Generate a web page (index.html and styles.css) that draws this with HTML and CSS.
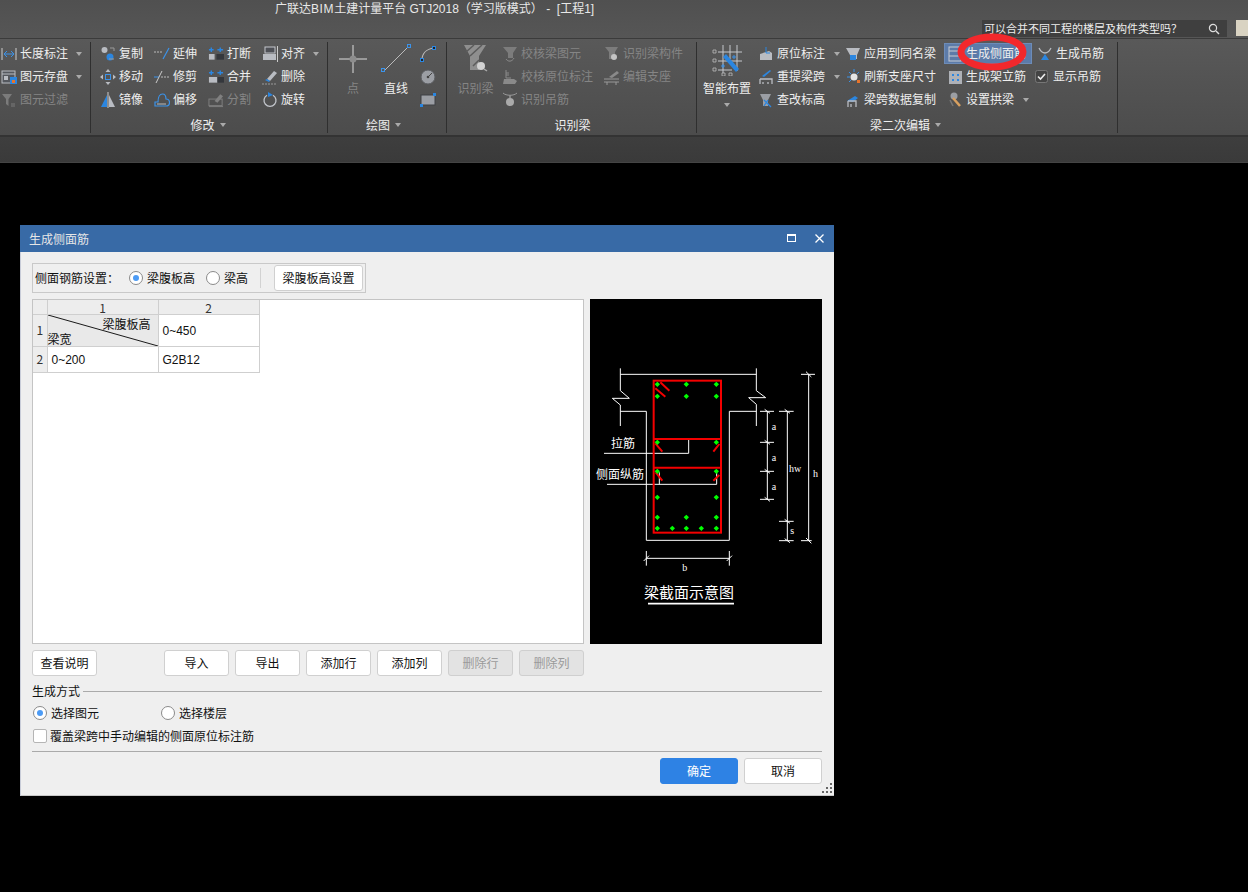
FILE: index.html
```html
<!DOCTYPE html>
<html lang="zh-CN">
<head>
<meta charset="utf-8">
<title>生成侧面筋</title>
<link rel="stylesheet" href="styles.css">
</head>
<body>
<div class="app">
  <header class="titlebar">
    <div class="app-title">广联达<span class="lat">BIM</span>土建计量平台 GTJ2018（学习版模式） -  [工程1]</div>
    <div class="search">
      <span class="search-text">可以合并不同工程的楼层及构件类型吗？</span>
      <svg class="search-ic" viewBox="0 0 12 12"><circle cx="5" cy="5" r="3.6" fill="none" stroke="#ddd" stroke-width="1.2"/><path d="M8 8l3 3" stroke="#ddd" stroke-width="1.4"/></svg>
    </div>
    <div class="avatar"></div>
  </header>

  <section class="ribbon">
    <div class="group g1">
      <div class="group-body">
        <div class="col">
          <div class="tool"><svg class="ic" viewBox="0 0 16 16"><path d="M1 2v12M15 2v12" stroke="#ccc"/><path d="M3 8h10M3 8l3-3M3 8l3 3M13 8l-3-3M13 8l-3 3" stroke="#3b93ea" fill="none"/></svg><span>长度标注</span><i class="caret"></i></div>
          <div class="tool"><svg class="ic" viewBox="0 0 16 16"><rect x="1" y="2" width="13" height="12" fill="#55585e" stroke="#b9bcc2"/><path d="M1 5h13" stroke="#b9bcc2"/><rect x="3" y="7" width="4" height="4" fill="#b9bcc2"/><rect x="9" y="8" width="7" height="7" fill="#2b86e0"/><rect x="11" y="11" width="3" height="3" fill="#e8742a"/></svg><span>图元存盘</span><i class="caret"></i></div>
          <div class="tool off"><svg class="ic" viewBox="0 0 16 16"><path d="M1 2h10L7.500 7v7L5 12V7z" fill="#7b7b7b"/><path d="M10 12h4M10 14h4" stroke="#7b7b7b"/></svg><span>图元过滤</span></div>
        </div>
      </div>
    </div>

    <div class="group g2">
      <div class="group-body">
        <div class="col">
          <div class="tool"><svg class="ic" viewBox="0 0 16 16"><circle cx="4.500" cy="4" r="3" fill="#b9bcc2"/><circle cx="10" cy="11" r="3.500" fill="#2b86e0"/><path d="M10 2h4v3M9 13h5" stroke="#9a9a9a" fill="none"/></svg><span>复制</span></div>
          <div class="tool"><svg class="ic" viewBox="0 0 16 16"><path d="M8 0l2.500 3h-5zM8 16l2.500-3h-5zM0 8l3-2.500v5zM16 8l-3-2.500v5z" fill="#b9bcc2"/><rect x="5.500" y="5.500" width="5" height="5" fill="none" stroke="#3b93ea"/></svg><span>移动</span></div>
          <div class="tool"><svg class="ic" viewBox="0 0 16 16"><path d="M7 3v12H1z" fill="#2b86e0"/><path d="M9 3v12h6z" fill="#b9bcc2"/><path d="M8 0v16" stroke="#ccc"/></svg><span>镜像</span></div>
        </div>
        <div class="col">
          <div class="tool"><svg class="ic" viewBox="0 0 16 16"><path d="M0 6h9" stroke="#bbb" stroke-dasharray="2 1"/><path d="M9 13L15 2" stroke="#3b93ea" stroke-width="1.200"/></svg><span>延伸</span></div>
          <div class="tool"><svg class="ic" viewBox="0 0 16 16"><path d="M0 8h5" stroke="#3b93ea"/><path d="M7 8h9" stroke="#bbb" stroke-dasharray="2 1"/><path d="M2 14L8 2" stroke="#ccc"/></svg><span>修剪</span></div>
          <div class="tool"><svg class="ic" viewBox="0 0 16 16"><path d="M1 14V10h3C4 5 6 2 8.500 2 11 2 12 4 12 7c2 0 3.500 1 3.500 3.500S14 14 12 14z" fill="none" stroke="#3b93ea" stroke-width="1.200"/><path d="M3 12h9" stroke="#bbb"/></svg><span>偏移</span></div>
        </div>
        <div class="col">
          <div class="tool"><svg class="ic" viewBox="0 0 17 16"><path d="M1 3.500h5M3.500 1v5M10 3.500h6M13 1v5" stroke="#2b86e0" stroke-width="1.500"/><rect x="1" y="8" width="6" height="6" fill="#b9bcc2"/><rect x="9" y="8" width="8" height="6" fill="#34373c"/></svg><span>打断</span></div>
          <div class="tool"><svg class="ic" viewBox="0 0 17 16"><path d="M1 3.500h5M3.500 1v5M10 3.500h6M13 1v5" stroke="#2b86e0" stroke-width="1.500"/><rect x="1" y="8" width="9" height="6" fill="#b9bcc2"/><rect x="10" y="8" width="7" height="6" fill="#34373c"/></svg><span>合并</span></div>
          <div class="tool off"><svg class="ic" viewBox="0 0 17 16"><rect x="1" y="7" width="14" height="7" fill="none" stroke="#808080"/><path d="M7 9l6-7 3 2-6 7z" fill="#808080"/><path d="M1 15h15" stroke="#808080"/></svg><span>分割</span></div>
        </div>
        <div class="col">
          <div class="tool"><svg class="ic" viewBox="0 0 16 16"><rect x="3" y="1" width="10" height="6" fill="#4f5157" stroke="#c3c6cc"/><rect x="1" y="8" width="13" height="6" fill="#b9bcc2"/><path d="M15.500 0v16" stroke="#ccc"/></svg><span>对齐</span><i class="caret"></i></div>
          <div class="tool"><svg class="ic" viewBox="0 0 16 16"><path d="M5 10l7-8 3 2-7 8z" fill="#b9bcc2"/><path d="M3 11l2-1 3 2-1 1z" fill="#2b86e0"/><path d="M0 15h15" stroke="#9a9a9a" stroke-dasharray="2 1"/></svg><span>删除</span></div>
          <div class="tool"><svg class="ic" viewBox="0 0 16 16"><path d="M5 3.200A6 6 0 1 0 11 3.200" fill="none" stroke="#c3c6cc" stroke-width="1.300"/><path d="M6 0l5 3-5 2z" fill="#2b86e0"/></svg><span>旋转</span></div>
        </div>
      </div>
      <div class="group-label"><span>修改</span><i class="caret"></i></div>
    </div>

    <div class="group g3">
      <div class="group-body">
        <div class="big w30 off-big">
          <svg class="bigic" viewBox="0 0 30 32"><path d="M15 1v28M1 15h28" stroke="#ddd"/><circle cx="15" cy="15" r="3.500" fill="#8d8d8d"/></svg>
          <span>点</span>
        </div>
        <div class="big w30">
          <svg class="bigic" viewBox="0 0 30 32"><path d="M3 27L27 3" stroke="#bbb"/><rect x="0.500" y="24.500" width="3" height="3" fill="none" stroke="#3b93ea"/><rect x="26.500" y="0.500" width="3" height="3" fill="none" stroke="#3b93ea"/></svg>
          <span>直线</span>
        </div>
        <div class="col">
          <div class="tool"><svg class="ic" viewBox="0 0 16 16"><path d="M2 14C2 8 6 3 14 2" fill="none" stroke="#bbb" stroke-width="1.200"/><rect x="0.500" y="12.500" width="3" height="3" fill="#222" stroke="#2b86e0"/><rect x="12.500" y="0.500" width="3" height="3" fill="#222" stroke="#2b86e0"/></svg></div>
          <div class="tool"><svg class="ic" viewBox="0 0 16 16"><circle cx="8" cy="8" r="7" fill="#9b9ea4" stroke="#5a5c60"/><circle cx="8" cy="8" r="1.300" fill="#444"/><path d="M8 8l4-4" stroke="#444"/></svg></div>
          <div class="tool"><svg class="ic" viewBox="0 0 16 16"><rect x="1" y="3" width="14" height="10" fill="#9b9ea4" stroke="#3e4044"/><rect x="0" y="12" width="3" height="3" fill="#2b86e0"/><rect x="13" y="1" width="3" height="3" fill="#2b86e0"/></svg></div>
        </div>
      </div>
      <div class="group-label"><span>绘图</span><i class="caret"></i></div>
    </div>

    <div class="group g4">
      <div class="group-body">
        <div class="big w37 off-big">
          <svg class="bigic" viewBox="0 0 37 32"><path d="M7 1h22l-7 11v14h-9V12z" fill="#8f8f8f"/><path d="M9 8l8-7M13 12l12-11M16 22l6-6" stroke="#5c5c5c" stroke-width="1.500"/><circle cx="24" cy="22" r="4" fill="#d2d2d2"/><path d="M27 25l3 2" stroke="#aaa" stroke-width="1.500"/></svg>
          <span>识别梁</span>
        </div>
        <div class="col">
          <div class="tool off"><svg class="ic" viewBox="0 0 16 16"><path d="M1 1h14l-4 6v5H6V7z" fill="#7c7c7c"/><path d="M4 13c2 3 6 3 8-1" stroke="#8a8a8a" fill="none"/></svg><span>校核梁图元</span></div>
          <div class="tool off"><svg class="ic" viewBox="0 0 16 16"><path d="M4 1v8h5M4 4h3M4 6h3" stroke="#8a8a8a" fill="none"/><path d="M2 10h10l3 2-2 3H1z" fill="#8a8a8a"/></svg><span>校核原位标注</span></div>
          <div class="tool off"><svg class="ic" viewBox="0 0 16 16"><path d="M1 1c3 3 11 3 14 0" stroke="#999" fill="none"/><path d="M7 5h2M8 3v3" stroke="#999"/><circle cx="8" cy="10" r="4" fill="#aaa"/></svg><span>识别吊筋</span></div>
        </div>
        <div class="col">
          <div class="tool off"><svg class="ic" viewBox="0 0 16 16"><path d="M1 1h13l-3 5v7H5V6z" fill="#7c7c7c"/><circle cx="10" cy="11" r="3" fill="#c4c4c4"/></svg><span>识别梁构件</span></div>
          <div class="tool off"><svg class="ic" viewBox="0 0 16 16"><path d="M5 8l8-6 2 2-7 5z" fill="#8a8a8a"/><path d="M0 10h15M0 13h15M3 13v3M12 13v3" stroke="#999"/></svg><span>编辑支座</span></div>
        </div>
      </div>
      <div class="group-label"><span>识别梁</span></div>
    </div>

    <div class="group g5">
      <div class="group-body">
        <div class="big w48">
          <svg class="bigic b30" viewBox="0 0 30 32"><path d="M6 8h24M6 17h24M6 26h14M11 1v28M18 1v14M25 1v26" stroke="#c4c7cc"/><path d="M1 6h3v3H1zM1 15h3v3H1zM1 24h3v3H1zM10 29h3v3h-3zM17 29h3v3h-3z" fill="none" stroke="#bbb" stroke-width=".8"/><path d="M11 13l3-3 13 15-3 3z" fill="#2b86e0"/><path d="M20 13h4M22 11v4M9 22h4M11 20v4" stroke="#3b93ea"/></svg>
          <span>智能布置</span>
          <i class="caret big-caret"></i>
        </div>
        <div class="col c2">
          <div class="tool"><svg class="ic" viewBox="0 0 14 16"><path d="M1 8l9-3 3 2v7H1z" fill="#b9bcc2"/><path d="M7 1v6h4" stroke="#2b86e0" fill="none"/></svg><span>原位标注</span><i class="caret"></i></div>
          <div class="tool"><svg class="ic" viewBox="0 0 14 16"><path d="M3 7l8-6 1 1-7 6z" fill="#2b86e0"/><path d="M1 10h12v5M1 10v5M4 13v2M9 13v2" stroke="#b9bcc2" stroke-width="1.300" fill="none"/></svg><span>重提梁跨</span><i class="caret"></i></div>
          <div class="tool"><svg class="ic" viewBox="0 0 14 16"><path d="M1 2h11L9 8v6H4V8z" fill="#9b9ea4"/><path d="M5 8l7 7M9 8l-4 6" stroke="#2b86e0" stroke-width="1.300"/></svg><span>查改标高</span></div>
        </div>
        <div class="col c3">
          <div class="tool"><svg class="ic" viewBox="0 0 14 16"><path d="M0 2h14l-3 7v4H4V9z" fill="#b9bcc2"/><path d="M4 9h6v5H4z" fill="#2b86e0"/></svg><span>应用到同名梁</span></div>
          <div class="tool"><svg class="ic" viewBox="0 0 14 16"><circle cx="8" cy="8" r="3.500" fill="#e5e5e5"/><path d="M8 0v3M1 8h3M3 3l2 2M13 3l-2 2M3 13l2-2" stroke="#3b93ea"/><rect x="11" y="11" width="3" height="3" fill="#e8742a"/></svg><span>刷新支座尺寸</span></div>
          <div class="tool"><svg class="ic" viewBox="0 0 14 16"><path d="M1 9l8-5 3 2-5 4z" fill="#2b86e0"/><path d="M2 9h8v6M2 9v6M5 12v3" stroke="#b9bcc2" stroke-width="1.300" fill="none"/></svg><span>梁跨数据复制</span></div>
        </div>
        <div class="col c4">
          <div class="tool active"><svg class="ic" viewBox="0 0 14 16"><rect x="1" y="1" width="12" height="14" fill="#5d7ba8" stroke="#c8ccd2"/><path d="M1 5h12M1 10h12" stroke="#c8ccd2"/></svg><span>生成侧面筋</span></div>
          <div class="tool"><svg class="ic" viewBox="0 0 14 16"><rect x="1" y="2" width="13" height="13" fill="#aeb1b7"/><path d="M4 5h2v2H4zM9 5h2v2H9zM4 10h2v2H4zM9 10h2v2H9z" fill="#2b86e0"/></svg><span>生成架立筋</span></div>
          <div class="tool"><svg class="ic" viewBox="0 0 14 16"><circle cx="6" cy="4" r="3.500" fill="#9b9ea4"/><path d="M5 6l7 8" stroke="#d8a060" stroke-width="2.500"/><path d="M2 8l3 6" stroke="#777" stroke-width="1.500"/></svg><span>设置拱梁</span><i class="caret"></i></div>
        </div>
        <div class="col c5">
          <div class="tool"><svg class="ic" viewBox="0 0 14 16"><path d="M1 2c2 4 4 5 6 5s4-1 6-5" stroke="#b9bcc2" stroke-width="1.300" fill="none"/><path d="M3 14h8L7 8z" fill="#2b86e0"/></svg><span>生成吊筋</span></div>
          <div class="tool check"><svg class="ic" viewBox="0 0 14 14"><rect x="0.500" y="0.500" width="12" height="12" rx="2" fill="#444" stroke="#777"/><path d="M3 6.500l2.500 2.500L10 4" fill="none" stroke="#eee" stroke-width="1.600"/></svg><span>显示吊筋</span></div>
        </div>
      </div>
      <div class="group-label"><span>梁二次编辑</span><i class="caret"></i></div>
    </div>
  </section>
  <div class="subbar"></div>

  <svg class="mark" viewBox="0 0 72 40"><ellipse cx="36" cy="20" rx="31" ry="15" fill="none" stroke="#f2282c" stroke-width="7"/></svg>

  <div class="dialog">
    <div class="dlg-title">
      <span>生成侧面筋</span>
      <div class="win-btns">
        <svg class="win" viewBox="0 0 9 9"><rect x="0.500" y="0.500" width="8" height="7" fill="none" stroke="#fff"/><path d="M0 1.500h9" stroke="#fff"/></svg>
        <svg class="win" viewBox="0 0 9 9"><path d="M.5.500l8 8M8.500.500l-8 8" stroke="#fff" stroke-width="1.300"/></svg>
      </div>
    </div>
    <div class="dlg-body">
      <div class="config">
        <span class="cfg-label">侧面钢筋设置：</span>
        <label class="opt"><i class="radio on"></i>梁腹板高</label>
        <label class="opt"><i class="radio"></i>梁高</label>
        <i class="vsep"></i>
        <button class="btn cfg-btn">梁腹板高设置</button>
      </div>

      <div class="main">
        <div class="grid-wrap">
          <table class="grid">
            <colgroup><col class="c-h"><col class="c-a"><col class="c-b"></colgroup>
            <thead>
              <tr class="r-head"><th></th><th>1</th><th>2</th></tr>
            </thead>
            <tbody>
              <tr class="r-one">
                <th>1</th>
                <td class="diag"><div class="diag-in"><span class="d-top">梁腹板高</span><span class="d-bot">梁宽</span><svg class="diag-line" viewBox="0 0 110 31" preserveAspectRatio="none"><path d="M0 0L110 31" stroke="#1a1a1a" stroke-width="1"/></svg></div></td>
                <td>0~450</td>
              </tr>
              <tr class="r-two">
                <th>2</th>
                <td>0~200</td>
                <td>G2B12</td>
              </tr>
            </tbody>
          </table>
        </div>
        <svg class="drawing" viewBox="0 0 232 345">
          <g transform="translate(0 51) scale(.33333)">
            <g fill="none" stroke="#fff" stroke-width="3">
              <path d="M91 73H499M91 55V122L118 145H67L91 165V228M499 55V122L527 143H476L499 163V228"/>
              <path d="M91 184H169V571H418V184H499"/>
              <path d="M42 310H296V267M51 403H380V367M208 403V367"/>
              <path d="M532 184V448M510 184H552M510 277H552M510 364H552M510 448H552M524 178L540 190M524 271L540 283M524 358L540 370M524 442L540 454"/>
              <path d="M592 184V572M567 184H611M567 514H611M567 572H611M584 178L600 190M584 508L600 520M584 566L600 578"/>
              <path d="M656 73V572M633 73H675M633 572H665M648 65L664 81M648 564L664 580"/>
              <path d="M169 625H418M169 603V647M418 603V647M161 633L177 617M410 633L426 617"/>
            </g>
            <g fill="none" stroke="#f40000" stroke-width="6">
              <rect x="191" y="92" width="202" height="456"/>
              <path d="M191 267H393M191 353H393"/>
              <path d="M211 97L238 122M196 115L226 140M196 280L217 305M388 282L370 305M197 367L217 392M388 375L370 392"/>
            </g>
            <path class="rebar" d="M194 103l8-8 8 8-8 8zM281 103l8-8 8 8-8 8zM371 103l8-8 8 8-8 8zM194 139l8-8 8 8-8 8zM281 139l8-8 8 8-8 8zM371 139l8-8 8 8-8 8zM194 277l8-8 8 8-8 8zM371 277l8-8 8 8-8 8zM194 364l8-8 8 8-8 8zM371 364l8-8 8 8-8 8zM194 442l8-8 8 8-8 8zM371 442l8-8 8 8-8 8zM194 502l8-8 8 8-8 8zM281 502l8-8 8 8-8 8zM371 502l8-8 8 8-8 8zM194 535l8-8 8 8-8 8zM239 535l8-8 8 8-8 8zM281 535l8-8 8 8-8 8zM326 535l8-8 8 8-8 8zM371 535l8-8 8 8-8 8z"/>
            <path d="M174 761H432" stroke="#fff" stroke-width="5"/>
            <g class="cad-cn">
              <text x="63" y="294">拉筋</text>
              <text x="18" y="387">侧面纵筋</text>
              <text class="cad-title" x="162" y="743">梁截面示意图</text>
            </g>
            <g class="cad-en">
              <text x="545" y="240">a</text>
              <text x="545" y="333">a</text>
              <text x="545" y="420">a</text>
              <text x="597" y="367">hw</text>
              <text x="601" y="553">s</text>
              <text x="669" y="382">h</text>
              <text x="277" y="664">b</text>
            </g>
          </g>
        </svg>
      </div>

      <div class="actions">
        <button class="btn">查看说明</button>
        <div class="actions-right">
          <button class="btn">导入</button>
          <button class="btn">导出</button>
          <button class="btn">添加行</button>
          <button class="btn">添加列</button>
          <button class="btn dis">删除行</button>
          <button class="btn dis">删除列</button>
        </div>
      </div>

      <div class="legend"><span>生成方式</span><i></i></div>
      <div class="mode-row">
        <label class="opt m1"><i class="radio on"></i>选择图元</label>
        <label class="opt"><i class="radio"></i>选择楼层</label>
      </div>
      <label class="opt cover"><i class="box"></i>覆盖梁跨中手动编辑的侧面原位标注筋</label>
      <div class="rule"></div>
      <div class="footer">
        <button class="btn ok">确定</button>
        <button class="btn cancel">取消</button>
      </div>
    </div>
    <svg class="grip" viewBox="0 0 11 11"><path d="M8 1h2v2H8zM4 5h2v2H4zM8 5h2v2H8zM0 9h2v2H0zM4 9h2v2H4zM8 9h2v2H8z" fill="#666"/></svg>
  </div>
</div>
</body>
</html>
```

FILE: styles.css
```css
* { box-sizing: border-box; }
html, body { margin: 0; height: 100%; background: #000; }
body { font: 12px/1.2 "Noto Sans CJK SC", "Liberation Sans", sans-serif; color: #111; overflow: hidden; }
.app { position: relative; width: 1248px; height: 892px; background: #000; }

/* title bar */
.titlebar { height: 38px; display: flex; background: linear-gradient(#505050, #565656); }
.app-title { padding: 1px 0 0 275px; height: 18px; line-height: 17px; color: #e8e8e8; white-space: pre; font-family: "Liberation Sans", "Noto Sans CJK SC", sans-serif; }
.lat { letter-spacing: .6px; }
.search { margin: 20px 0 0 auto; width: 245px; height: 17px; padding: 0 7px 0 2px; display: flex; align-items: center; justify-content: space-between; background: #3f3f3f; color: #eee; font-size: 11px; }
.search-ic { width: 12px; height: 12px; }
.avatar { margin: 20px 0 0 9px; width: 12px; height: 16px; background: #d9d3c2; }

/* ribbon */
.ribbon { height: 99px; display: flex; padding-top: 3px; border-top: 1px solid #3b3b3b; border-bottom: 2px solid #333; background: linear-gradient(#595959, #4c4c4c); color: #eee; }
.group { display: flex; flex-direction: column; height: 91px; border-right: 1px solid #2f2f2f; }
.g1 { width: 91px; padding-left: 1px; }
.g2 { width: 237px; padding-left: 9px; }
.g3 { width: 119px; padding-left: 10px; }
.g4 { width: 250px; padding-left: 10px; }
.g5 { width: 421px; padding-left: 6px; }
.group-body { display: flex; flex: none; height: 69px; }
.g2 .group-body { gap: 11px; }
.g3 .group-body { gap: 13px; }
.g3 .col { margin-left: -4px; }
.g4 .group-body { gap: 8px; }
.g4 .col + .col { margin-left: 3px; }
.col { display: flex; flex-direction: column; }
.tool { height: 23px; display: flex; align-items: center; gap: 3px; white-space: nowrap; }
.tool.off { color: #858585; }
.ic { width: 16px; height: 16px; flex: none; }
.g5 .ic { width: 14px; }
.g5 .tool { gap: 4px; }
.c2 { width: 87px; margin-left: 8px; }
.c3 { width: 102px; }
.c4 { width: 90px; }
.g5 .active { align-self: flex-start; height: 19px; margin: 2px -5px 2px -3px; padding: 0 5px 0 3px; background: #5c7ba9; box-shadow: 0 0 0 1px #6d8cb8; }
.g5 .check { margin-left: -3px; }
.caret { display: inline-block; width: 0; height: 0; margin-left: 5px; border: 3.5px solid transparent; border-top: 4px solid #aaa; border-bottom: 0; }
.group-label { flex: none; height: 22px; margin-top: 3px; display: flex; align-items: center; justify-content: center; }
.g2 .group-label { padding-right: 11px; }
.g3 .group-label { padding-right: 17px; }
.g4 .group-label { padding-right: 8px; }
.g5 .group-label { padding-right: 9px; }
.big { display: flex; flex-direction: column; align-items: center; white-space: nowrap; padding-top: 2px; }
.big span { margin-top: 3px; line-height: 18px; }
.w30 { width: 30px; }
.w37 { width: 37px; }
.w48 { width: 48px; }
.off-big { color: #858585; }
.bigic { width: 30px; height: 32px; flex: none; }
.w37 .bigic { width: 37px; }
.big-caret { margin: 6px 0 0; }

.subbar { height: 26px; background: linear-gradient(#3e3e3e, #3a3a3a); border-bottom: 1px solid #444; }

/* highlight ring drawn over the ribbon */
.mark { position: absolute; left: 956px; top: 32px; width: 72px; height: 40px; }

/* dialog */
.dialog { position: absolute; left: 20px; top: 225px; width: 814px; height: 571px; background: #efefef; border-left: 1px solid #c8ccd8; border-bottom: 1px solid #c8c8c8; }
.dlg-title { height: 27px; margin-left: -1px; padding: 1px 10px 0 9px; display: flex; align-items: center; justify-content: space-between; background: #386aa6; color: #e6e6e6; }
.win-btns { display: flex; gap: 19px; margin-top: -1px; }
.win { width: 9px; height: 9px; }
.dlg-body { padding: 11px 12px 0 11px; }
.config { width: 334px; height: 30px; padding-left: 2px; display: flex; align-items: center; border: 1px solid #c9c9c9; }
.cfg-label { width: 94px; }
.opt { display: flex; align-items: center; gap: 4px; white-space: nowrap; }
.config .opt { margin-right: 11px; }
.radio { display: block; position: relative; width: 14px; height: 14px; flex: none; border: 1px solid #8a8a8a; border-radius: 50%; background: #fff; }
.radio.on::after { content: ""; position: absolute; left: 3px; top: 3px; width: 6px; height: 6px; border-radius: 50%; background: #4c9bf5; }
.box { display: block; width: 14px; height: 14px; flex: none; border: 1px solid #b5b5b5; border-radius: 2px; background: #fff; }
.vsep { width: 1px; height: 20px; margin: 0 13px 0 1px; background: #d2d2d2; }
.btn { width: 65px; height: 26px; padding: 0; font: inherit; color: #111; background: #fff; border: 1px solid #d0d0d0; border-radius: 3px; }
.cfg-btn { width: 89px; }
.btn.dis { background: #e3e3e3; color: #9a9a9a; border-color: #cfcfcf; }

.main { display: flex; gap: 6px; margin-top: 6px; height: 345px; }
.grid-wrap { width: 552px; background: #fff; border: 1px solid #c4c4c4; }
.grid { border-collapse: collapse; table-layout: fixed; width: 226px; }
.c-h { width: 14px; }
.c-a { width: 111px; }
.c-b { width: 101px; }
.grid th, .grid td { padding: 0; border: 1px solid #cfcfcf; font-weight: 400; }
.grid tr:first-child th { border-top: 0; }
.grid tr th:first-child { border-left: 0; }
.grid th { background: #ededed; text-align: center; color: #333; }
.grid td { padding: 2px 0 0 4px; font-family: "Liberation Sans", "Noto Sans CJK SC", sans-serif; }
.r-head { height: 14px; }
.grid .r-head th { padding-top: 1px; line-height: 13px; color: #333; }
.r-one { height: 32px; }
.r-two { height: 26px; }
.grid td.diag { padding: 0; font-family: "Noto Sans CJK SC", sans-serif; background: #e9e9e9; }
.diag-in { position: relative; height: 31px; display: flex; flex-direction: column; justify-content: space-between; line-height: 14px; padding-top: 2px; }
.d-top { align-self: flex-end; padding-right: 7px; }
.diag-line { position: absolute; left: 0; top: 0; width: 100%; height: 100%; }

.drawing { width: 232px; height: 345px; background: #000; display: block; }
.rebar { fill: #0f0; }
.cad-cn text { fill: #fff; font-size: 36px; }
.cad-cn .cad-title { font-size: 45px; }
.cad-en text { fill: #fff; font: 30px "Liberation Serif", serif; }

.actions { display: flex; justify-content: space-between; width: 552px; margin-top: 6px; }
.actions-right { display: flex; gap: 6px; }

.legend { display: flex; align-items: center; gap: 3px; margin-top: 7px; height: 16px; }
.legend i { flex: 1; height: 1px; background: #aaa; }
.mode-row { display: flex; margin-top: 5px; height: 18px; padding-left: 1px; }
.m1 { width: 128px; }
.cover { gap: 3px; margin-top: 5px; height: 18px; padding-left: 1px; }
.rule { height: 1px; margin-top: 6px; background: #aaa; }
.footer { display: flex; justify-content: flex-end; gap: 6px; margin-top: 6px; }
.ok, .cancel { width: 78px; }
.btn.ok { background: #2e82e4; border-color: #2e82e4; color: #fff; }

.grip { position: absolute; right: 1px; bottom: 2px; width: 11px; height: 11px; }
```
